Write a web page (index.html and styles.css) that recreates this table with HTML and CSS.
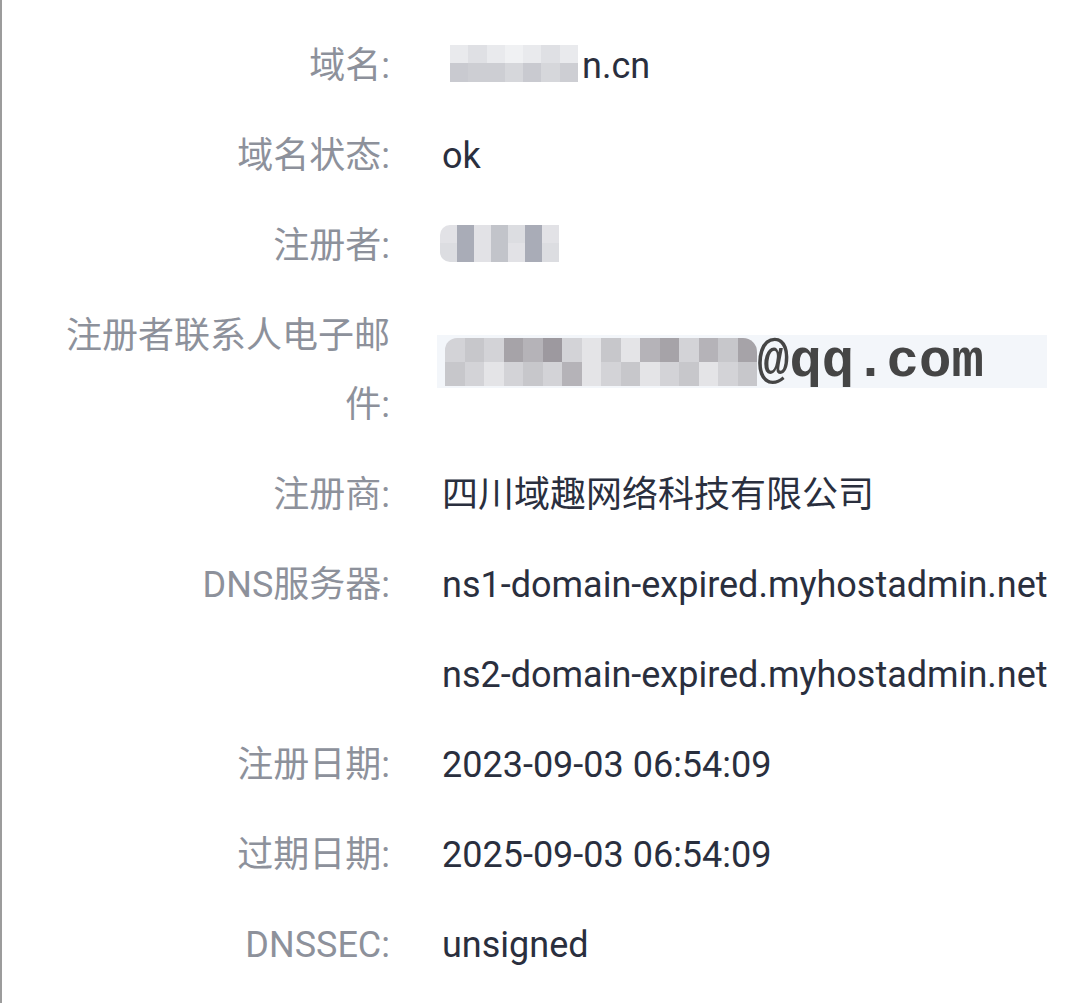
FILE: index.html
```html
<!DOCTYPE html>
<html lang="zh-CN">
<head>
<meta charset="utf-8">
<title>域名信息</title>
<link rel="stylesheet" href="styles.css">
</head>
<body>
<div class="panel">
  <div class="info">
    <div class="label">域名:</div>
    <div class="value">
      <span class="mosaic m-domain">
        <i class="a1"></i><i class="a2"></i><i class="a1"></i><i class="a3"></i><i class="a1"></i><i class="a2"></i><i class="a1"></i>
        <i class="b2"></i><i class="b3"></i><i class="b3"></i><i class="b1"></i><i class="b2"></i><i class="b1"></i><i class="b3"></i>
      </span><span class="tail">n.cn</span>
    </div>

    <div class="label">域名状态:</div>
    <div class="value">ok</div>

    <div class="label">注册者:</div>
    <div class="value">
      <span class="mosaic m-owner">
        <i class="c1"></i><i class="c4"></i><i class="c1"></i><i class="c3"></i><i class="c2"></i><i class="c4"></i><i class="c1"></i>
        <i class="c2"></i><i class="c4"></i><i class="c1"></i><i class="c3"></i><i class="c1"></i><i class="c4"></i><i class="c2"></i>
      </span>
    </div>

    <div class="label">注册者联系人电子邮件:</div>
    <div class="value">
      <div class="email-img">
        <span class="mosaic m-email">
          <i class="d2"></i><i class="d3"></i><i class="d2"></i><i class="d5"></i><i class="d4"></i><i class="d6"></i><i class="d2"></i><i class="d1"></i><i class="d3"></i><i class="d1"></i><i class="d4"></i><i class="d5"></i><i class="d2"></i><i class="d4"></i><i class="d3"></i><i class="d5"></i>
          <i class="d3"></i><i class="d2"></i><i class="d1"></i><i class="d2"></i><i class="d3"></i><i class="d2"></i><i class="d4"></i><i class="d1"></i><i class="d2"></i><i class="d3"></i><i class="d1"></i><i class="d2"></i><i class="d3"></i><i class="d1"></i><i class="d2"></i><i class="d3"></i>
        </span><span class="email-text">@qq.com</span>
      </div>
    </div>

    <div class="label">注册商:</div>
    <div class="value">四川域趣网络科技有限公司</div>

    <div class="label">DNS服务器:</div>
    <div class="value stack">
      <div>ns1-domain-expired.myhostadmin.net</div>
      <div>ns2-domain-expired.myhostadmin.net</div>
    </div>

    <div class="label">注册日期:</div>
    <div class="value">2023-09-03 06:54:09</div>

    <div class="label">过期日期:</div>
    <div class="value">2025-09-03 06:54:09</div>

    <div class="label">DNSSEC:</div>
    <div class="value">unsigned</div>
  </div>
</div>
</body>
</html>
```

FILE: styles.css
```css
html, body {
  margin: 0;
  padding: 0;
  background: #ffffff;
}

body {
  font-family: Roboto, "Noto Sans CJK SC", sans-serif;
  font-size: 36px;
  line-height: 69px;
}

.panel {
  min-height: 1003px;
  box-sizing: border-box;
  border-left: 2px solid #9c9c9c;
  padding-top: 32px;
}

.info {
  display: grid;
  grid-template-columns: 340px 1fr;
  column-gap: 52px;
  row-gap: 21px;
  padding-left: 48px;
}

.label {
  text-align: right;
  color: #8d919b;
}

.value {
  color: #2a2f3e;
  white-space: nowrap;
}

.stack {
  display: flex;
  flex-direction: column;
  gap: 21px;
}

.mosaic {
  display: inline-grid;
  vertical-align: top;
  margin-top: 13px;
}

.mosaic i {
  display: block;
}

.m-domain {
  margin-left: 8px;
  grid-template-columns: repeat(7, 18.3px);
  grid-template-rows: 18px 19px;
}

.tail {
  margin-left: 4px;
}

.m-owner {
  margin-left: -2px;
  grid-template-columns: repeat(7, 17px);
  grid-template-rows: 18px 19px;
  border-radius: 10px 0 0 10px;
  overflow: hidden;
}

.a1 { background: #e9eaed; }
.a2 { background: #dfe0e4; }
.a3 { background: #f0f1f3; }
.b1 { background: #d6d7db; }
.b2 { background: #c9cad0; }
.b3 { background: #cdced3; }

.c1 { background: #e2e2e6; }
.c2 { background: #dcdde1; }
.c3 { background: #c2c4ca; }
.c4 { background: #a9acb7; }

.email-img {
  margin-top: 33px;
  margin-left: -5px;
  width: 610px;
  height: 53px;
  background: #f3f6fa;
  display: flex;
  align-items: center;
}

.m-email {
  margin-top: 0;
  margin-left: 8px;
  grid-template-columns: repeat(16, 19.5px);
  grid-template-rows: 24px 24px;
  border-radius: 12px 14px 0 0;
  overflow: hidden;
}

.d1 { background: #e4e4e7; }
.d2 { background: #d3d3d7; }
.d3 { background: #c7c7cb; }
.d4 { background: #b5b3b8; }
.d5 { background: #a6a3a8; }
.d6 { background: #9d999f; }

.email-text {
  font-family: "Liberation Mono", "DejaVu Sans Mono", monospace;
  font-weight: bold;
  font-size: 54px;
  line-height: 53px;
  color: #454545;
  letter-spacing: 0;
}
```
